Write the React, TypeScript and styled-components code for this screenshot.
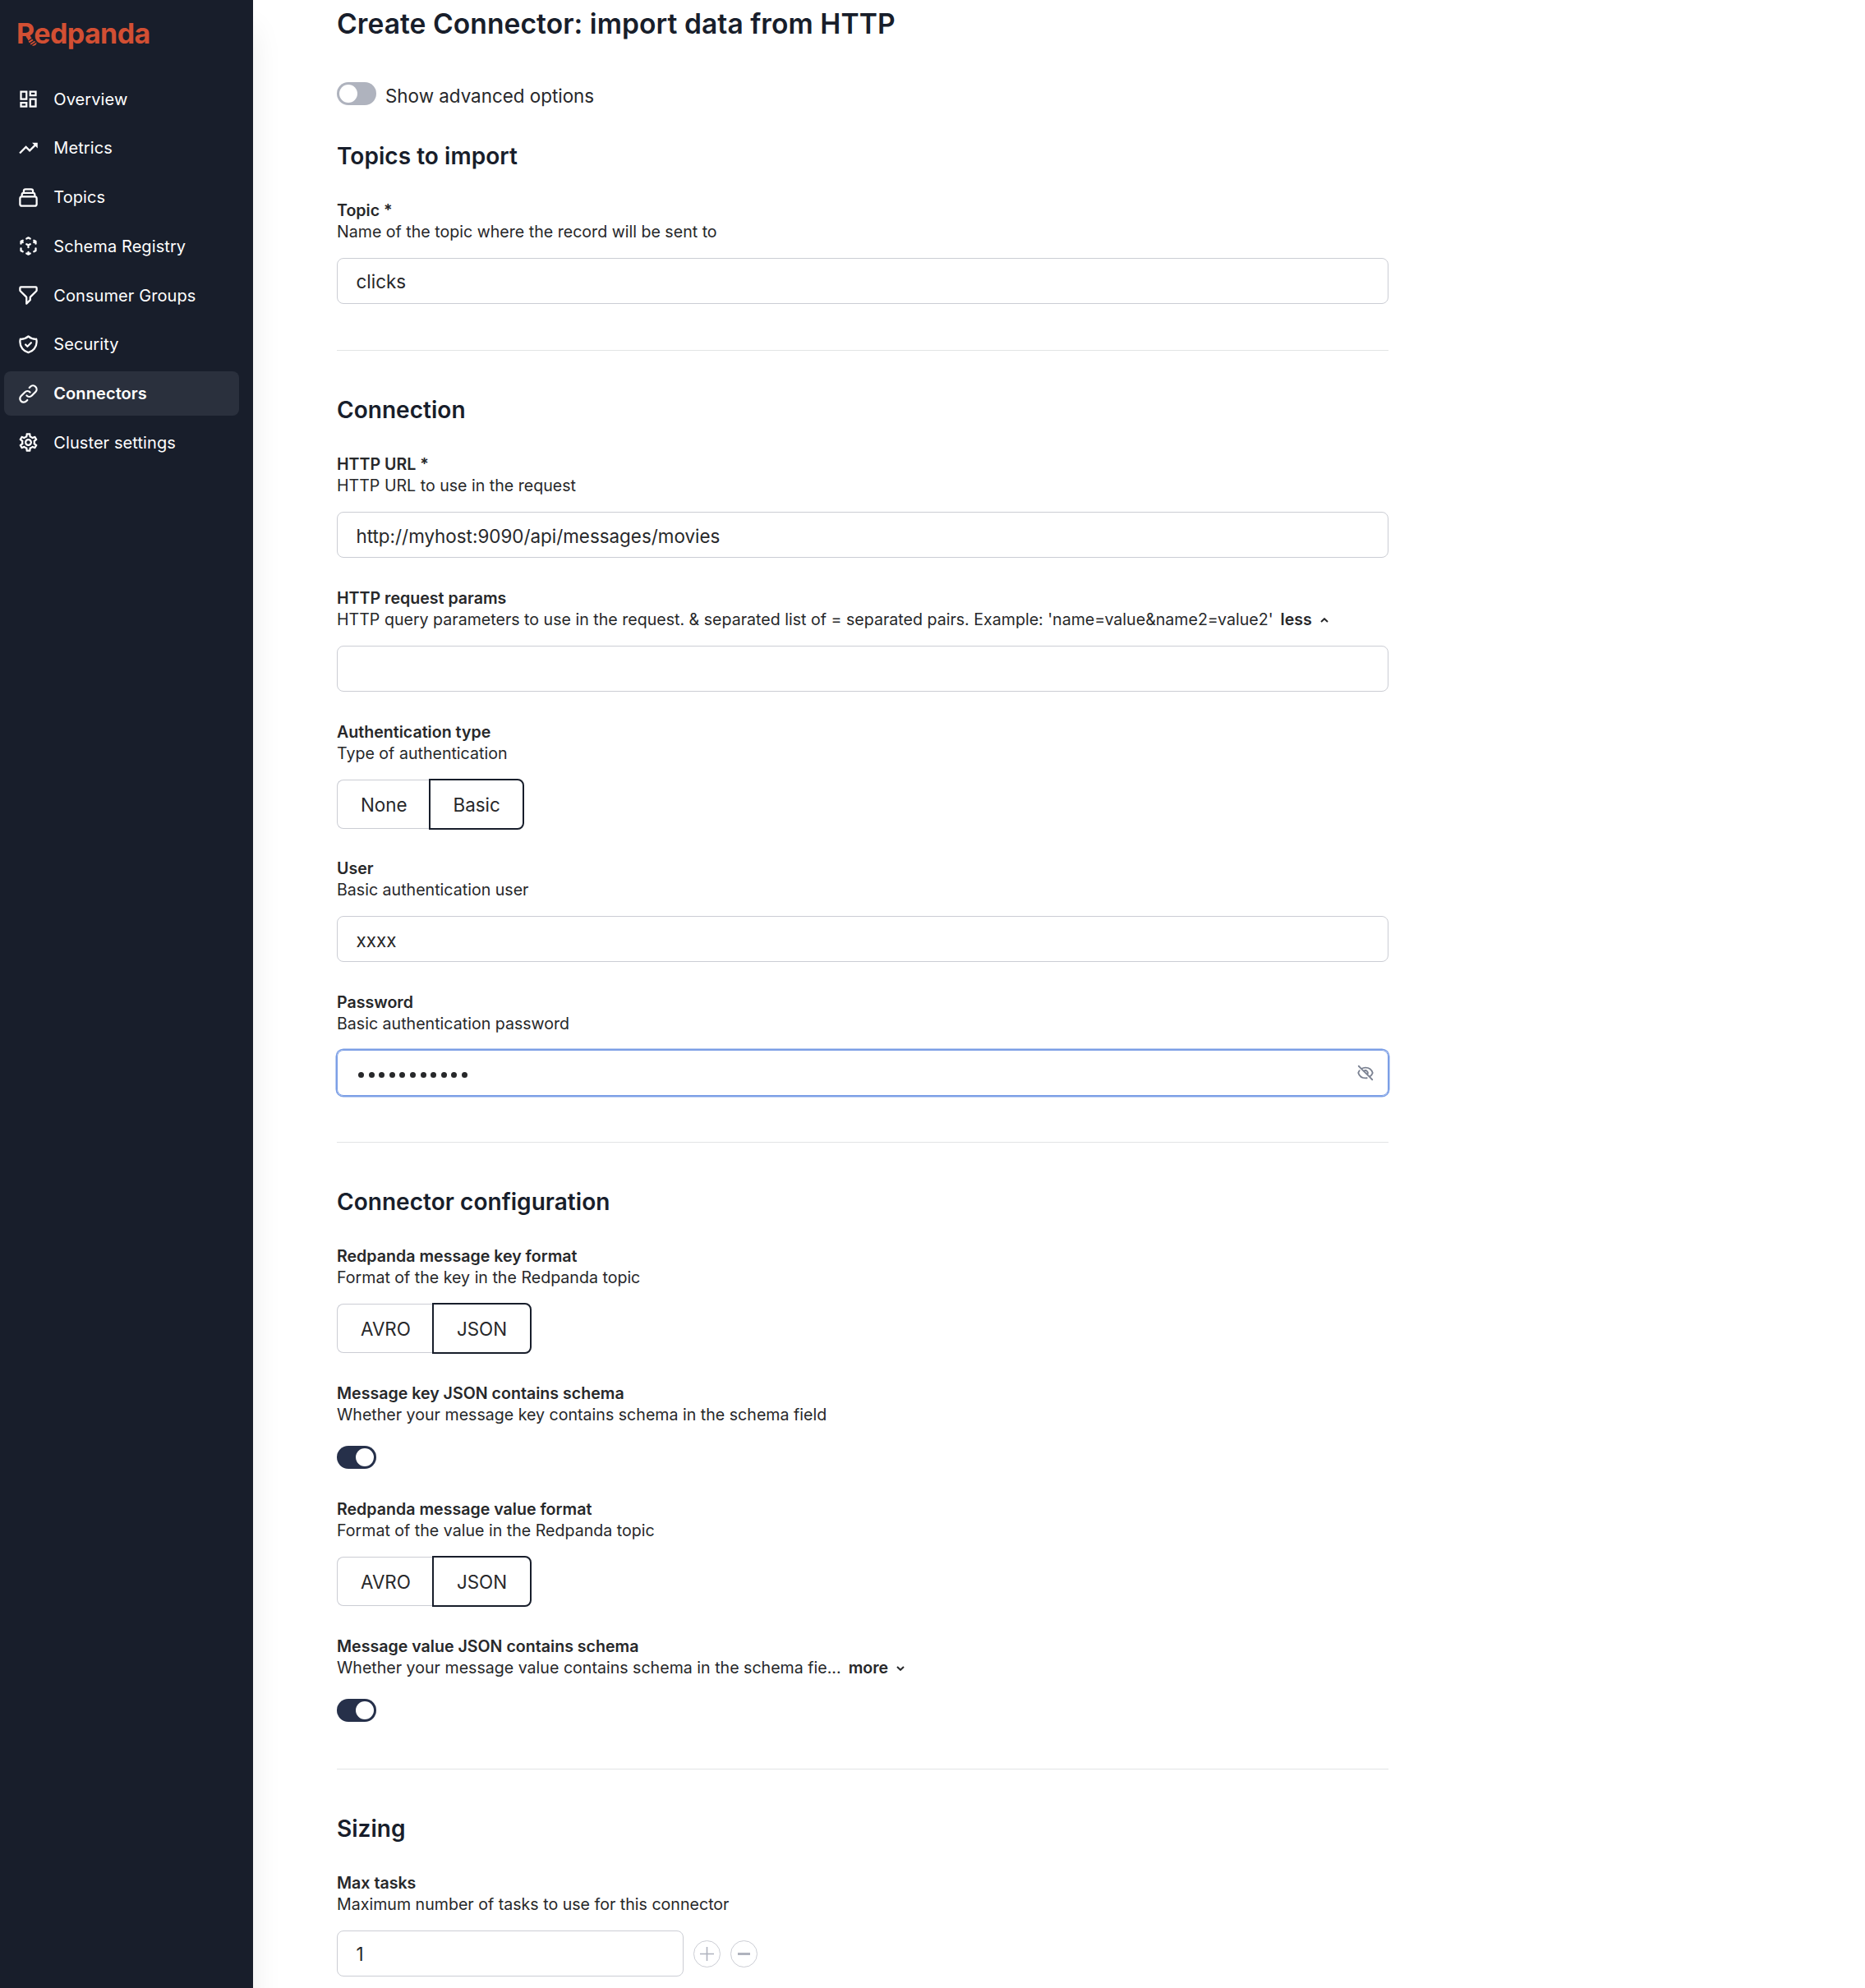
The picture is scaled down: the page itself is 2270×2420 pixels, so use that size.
import React from "react";
import styled, { createGlobalStyle, css } from "styled-components";
import { MdOutlineDashboard, MdTrendingUp, MdOutlineSettings } from "react-icons/md";
import {
  HiOutlineCollection,
  HiOutlineCubeTransparent,
  HiOutlineFilter,
  HiOutlineShieldCheck,
  HiOutlineLink,
  HiOutlineEyeOff,
} from "react-icons/hi";

const ink = "#181e2b";
const text = "#27282a";
const line = "#cbcdd4";
const brand = "#d24f33";

const Global = createGlobalStyle`
  *, *::before, *::after { box-sizing: border-box; }
  body {
    margin: 0;
    background: #fff;
    color: ${text};
    font-family: Inter, "Liberation Sans", sans-serif;
  }
`;

const Page = styled.div`
  display: flex;
  width: 2270px;
  height: 2420px;
  overflow: hidden;
`;

const Sidebar = styled.aside`
  flex: none;
  width: 308px;
  background: ${ink};
  color: #fff;
  box-shadow: 0 35px 35px rgba(0, 0, 0, 0.08);
`;

const Brand = styled.div`
  position: relative;
  height: 84px;
  padding: 16px 0 0 20px;
  color: ${brand};
  font-size: 34px;
  line-height: 50px;
  font-weight: 700;
  letter-spacing: -0.6px;
`;

const BrandTail = styled.svg`
  position: absolute;
  left: 32px;
  top: 45px;
`;

const Nav = styled.nav`
  display: flex;
  flex-direction: column;
  gap: 5.75px;
  padding: 9.4px 17px 0 5px;
`;

const NavItem = styled.a<{ $active?: boolean }>`
  display: flex;
  align-items: center;
  gap: 17.3px;
  height: 54px;
  padding: 0.6px 0 0 16px;
  border-radius: 8px;
  font-size: 20px;
  letter-spacing: 0.08px;
  background: ${(p) => (p.$active ? "#2a303d" : "transparent")};
  font-weight: ${(p) => (p.$active ? 600 : 400)};
  svg {
    flex: none;
    width: 27px;
    height: 27px;
  }
`;

const Main = styled.main`
  width: 1382px;
  padding: 6px 0 0 102px;
  white-space: nowrap;
`;

const Title = styled.h1`
  margin: 0;
  font-size: 33.6px;
  line-height: 46px;
  font-weight: 600;
  letter-spacing: 0.06px;
  color: ${ink};
`;

const Advanced = styled.div`
  display: flex;
  align-items: flex-start;
  gap: 11px;
  margin-top: 48px;
  height: 34px;
  font-size: 22.4px;
  line-height: 34px;
`;

const Track = styled.span<{ $on?: boolean }>`
  display: flex;
  justify-content: ${(p) => (p.$on ? "flex-end" : "flex-start")};
  width: 48px;
  height: 28px;
  padding: 3px;
  border-radius: 14px;
  background: ${(p) => (p.$on ? "#26304a" : "#afb3be")};
  &::after {
    content: "";
    width: 22px;
    height: 22px;
    border-radius: 50%;
    background: #fff;
  }
`;

const SwitchRow = styled.div`
  display: flex;
  padding: 6px 0 1px;
`;

const Section = styled.section<{ $top?: number }>`
  padding-top: ${(p) => p.$top ?? 54}px;
`;

const Heading = styled.h2`
  margin: 0 0 36.1px;
  font-size: 28px;
  line-height: 36px;
  font-weight: 600;
  letter-spacing: 0.04px;
  color: ${ink};
`;

const Rule = styled.hr`
  margin: 56px 0 0;
  border: 0;
  height: 1px;
  background: #e2e4e5;
`;

const FieldBox = styled.div`
  & + & {
    margin-top: 36.6px;
  }
`;

const Label = styled.div`
  font-size: 19.6px;
  line-height: 25.9px;
  font-weight: 600;
`;

const Hint = styled.div`
  display: flex;
  align-items: center;
  font-size: 19.6px;
  line-height: 25.9px;
  margin-bottom: 18.3px;
`;

const More = styled.span`
  display: flex;
  align-items: center;
  gap: 10px;
  margin-left: 9px;
  font-weight: 600;
`;

const Input = styled.div<{ $short?: boolean; $focus?: boolean }>`
  display: flex;
  align-items: center;
  justify-content: space-between;
  width: ${(p) => (p.$short ? "422px" : "100%")};
  height: 56px;
  padding: ${(p) => (p.$focus ? 0 : 1.5)}px 16px 0 22.5px;
  border: 1px solid ${line};
  border-radius: 8px;
  font-size: 22.4px;
  ${(p) =>
    p.$focus &&
    css`
      border-color: #7c9fe6;
      box-shadow: 0 0 0 1.5px #7c9fe6;
    `}
`;

const Dots = styled.span`
  display: flex;
  gap: 5.6px;
  padding: 5px 0 0 2.5px;
  i {
    width: 7px;
    height: 7px;
    border-radius: 50%;
    background: ${text};
  }
`;

const Segments = styled.div`
  display: flex;
  height: 59.8px;
`;

const Segment = styled.span<{ $on?: boolean }>`
  display: flex;
  align-items: center;
  padding: 1px 26px 0 28px;
  font-size: 22.4px;
  border: 1px solid ${line};
  border-right: 0;
  border-radius: 8px 0 0 8px;
  ${(p) =>
    p.$on &&
    css`
      margin: -1px 0;
      padding-right: 27.6px;
      border: 2px solid ${ink};
      border-radius: 0 8px 8px 0;
    `}
`;

const Stepper = styled.div`
  display: flex;
  align-items: center;
  gap: 12px;
`;

const Round = styled.span`
  display: grid;
  place-items: center;
  width: 33px;
  height: 33px;
  border: 1px solid ${line};
  border-radius: 50%;
`;

const Chevron = ({ up }: { up?: boolean }) => (
  <svg width="10" height="6" viewBox="0 0 10 6" fill="none" stroke={text} strokeWidth="2">
    <path d={up ? "M1 5L5 1.2L9 5" : "M1 1L5 4.8L9 1"} />
  </svg>
);

const navItems: [string, React.ComponentType][] = [
  ["Overview", MdOutlineDashboard],
  ["Metrics", MdTrendingUp],
  ["Topics", HiOutlineCollection],
  ["Schema Registry", HiOutlineCubeTransparent],
  ["Consumer Groups", HiOutlineFilter],
  ["Security", HiOutlineShieldCheck],
  ["Connectors", HiOutlineLink],
  ["Cluster settings", MdOutlineSettings],
];

type FieldProps = {
  label: string;
  hint: string;
  toggle?: "less" | "more";
  children: React.ReactNode;
};

const Field = ({ label, hint, toggle, children }: FieldProps) => (
  <FieldBox>
    <Label>{label}</Label>
    <Hint>
      {hint}
      {toggle && (
        <More>
          {toggle}
          <Chevron up={toggle === "less"} />
        </More>
      )}
    </Hint>
    {children}
  </FieldBox>
);

const Choice = ({ options }: { options: [string, string] }) => (
  <Segments>
    <Segment>{options[0]}</Segment>
    <Segment $on>{options[1]}</Segment>
  </Segments>
);

export default function App() {
  return (
    <Page>
      <Global />
      <Sidebar>
        <Brand>
          Redpanda
          {/* striped panda tail at the foot of the R */}
          <BrandTail width="14" height="12" viewBox="0 0 14 12">
            <path d="M0.5 1.5H8L12 4V11H0.5Z" fill={ink} />
            <path d="M1 1L5 0.5L6.5 1.6L2.4 4.6Z" fill={brand} />
            <path d="M2.6 5.6L7.2 2.6L8.6 4L3.8 7.2Z" fill={brand} />
            <path d="M4.6 8.2L9.6 4.9L11 5.6L11.2 6L5.8 9.4Z" fill={brand} />
            <path d="M7 10.2L12.6 6.6Q12.4 10.6 9 10.8Q7.8 10.8 7 10.2Z" fill={brand} />
          </BrandTail>
        </Brand>
        <Nav>
          {navItems.map(([name, Icon]) => (
            <NavItem key={name} $active={name === "Connectors"}>
              <Icon />
              {name}
            </NavItem>
          ))}
        </Nav>
      </Sidebar>
      <Main>
        <Title>Create Connector: import data from HTTP</Title>
        <Advanced>
          <Track />
          Show advanced options
        </Advanced>
        <Section $top={38}>
          <Heading>Topics to import</Heading>
          <Field label="Topic *" hint="Name of the topic where the record will be sent to">
            <Input>clicks</Input>
          </Field>
          <Rule />
        </Section>
        <Section>
          <Heading>Connection</Heading>
          <Field label="HTTP URL *" hint="HTTP URL to use in the request">
            <Input>http://myhost:9090/api/messages/movies</Input>
          </Field>
          <Field
            label="HTTP request params"
            hint="HTTP query parameters to use in the request. & separated list of = separated pairs. Example: 'name=value&name2=value2'"
            toggle="less"
          >
            <Input />
          </Field>
          <Field label="Authentication type" hint="Type of authentication">
            <Choice options={["None", "Basic"]} />
          </Field>
          <Field label="User" hint="Basic authentication user">
            <Input>xxxx</Input>
          </Field>
          <Field label="Password" hint="Basic authentication password">
            <Input $focus>
              <Dots>
                {Array.from({ length: 11 }, (_, i) => (
                  <i key={i} />
                ))}
              </Dots>
              <HiOutlineEyeOff size={22} color="#7b8292" />
            </Input>
          </Field>
          <Rule />
        </Section>
        <Section>
          <Heading>Connector configuration</Heading>
          <Field label="Redpanda message key format" hint="Format of the key in the Redpanda topic">
            <Choice options={["AVRO", "JSON"]} />
          </Field>
          <Field
            label="Message key JSON contains schema"
            hint="Whether your message key contains schema in the schema field"
          >
            <SwitchRow>
              <Track $on />
            </SwitchRow>
          </Field>
          <Field label="Redpanda message value format" hint="Format of the value in the Redpanda topic">
            <Choice options={["AVRO", "JSON"]} />
          </Field>
          <Field
            label="Message value JSON contains schema"
            hint="Whether your message value contains schema in the schema fie..."
            toggle="more"
          >
            <SwitchRow>
              <Track $on />
            </SwitchRow>
          </Field>
          <Rule />
        </Section>
        <Section>
          <Heading>Sizing</Heading>
          <Field label="Max tasks" hint="Maximum number of tasks to use for this connector">
            <Stepper>
              <Input $short>1</Input>
              <Round>
                <svg width="17" height="17" viewBox="0 0 17 17" stroke="#afb3be" strokeWidth="1.6">
                  <path d="M8.5 0V17M0 8.5H17" />
                </svg>
              </Round>
              <Round>
                <svg width="15" height="3" viewBox="0 0 15 3">
                  <rect width="15" height="3" fill="#afb3be" />
                </svg>
              </Round>
            </Stepper>
          </Field>
        </Section>
      </Main>
    </Page>
  );
}
